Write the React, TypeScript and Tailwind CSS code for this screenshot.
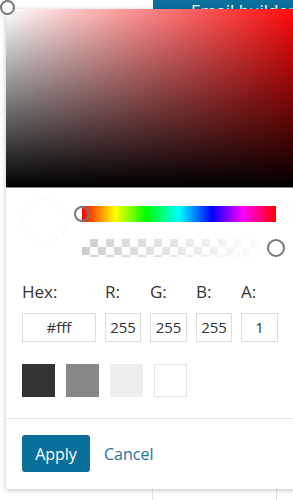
import React from "react";

export default function App() {
  const checker = {
    backgroundImage:
      "linear-gradient(to right, rgba(255,255,255,0) 0%, rgba(255,255,255,1) 100%), repeating-conic-gradient(#cfcfcf 0% 25%, #ffffff 0% 50%)",
    backgroundSize: "100% 100%, 16px 16px",
  } as React.CSSProperties;
  return (
    <div className="relative w-[293px] h-[500px] bg-white overflow-hidden" style={{ fontFamily: "'Open Sans', 'Noto Sans', sans-serif" }}>
      {/* background page */}
      <div className="flex justify-end">
        <div className="w-[140px] h-[40px] bg-[#0b6f9c] text-white text-[17px] leading-none pt-[2px] pl-[38px] whitespace-nowrap">Email builder</div>
      </div>
      <div className="absolute left-[152px] top-[480px] w-[1px] h-[20px] bg-[#e3e3e3]" />
      <div className="absolute left-[276px] top-[480px] w-[1px] h-[20px] bg-[#e3e3e3]" />

      {/* popup */}
      <div className="absolute left-[6px] top-[9px] w-[300px] h-[480px] bg-white shadow-[0_1px_5px_rgba(0,0,0,0.25)] flex flex-col">
        <div className="relative h-[179px] border-b border-[#888]" style={{ background: "linear-gradient(to bottom, rgba(0,0,0,0), #000), linear-gradient(to right, #fff, #f00)" }} />
        <div className="relative h-[90px]">
          <div className="absolute left-[17px] top-[11px] w-[43px] h-[43px] rounded-full bg-white shadow-[0_0_2px_rgba(0,0,0,0.08)]" />
          <div className="absolute left-[76px] top-[18px] w-[194px] h-[16px]" style={{ background: "linear-gradient(to right, #f00 0%, #ff0 17%, #0f0 33%, #0ff 50%, #00f 67%, #f0f 83%, #f00 100%)" }} />
          <div className="absolute left-[68px] top-[18px] w-[16px] h-[16px] rounded-full border-2 border-[#777]" />
          <div className="absolute left-[76px] top-[51px] w-[188px] h-[18px]" style={checker} />
          <div className="absolute left-[261px] top-[51px] w-[18px] h-[18px] rounded-full border-2 border-[#777] bg-white" />
        </div>
        <div className="px-[16px] text-[#333]">
          <div className="flex gap-[9px] text-[17px] leading-none pt-[5px]">
            <div className="w-[74px]">Hex:</div>
            <div className="w-[36px]">R:</div>
            <div className="w-[37px]">G:</div>
            <div className="w-[36px]">B:</div>
            <div className="w-[37px]">A:</div>
          </div>
          <div className="flex gap-[9px] mt-[13px] text-[15px]">
            <div className="w-[74px] h-[29px] border border-[#ddd] flex items-center justify-center">#fff</div>
            <div className="w-[36px] h-[29px] border border-[#ddd] flex items-center justify-center">255</div>
            <div className="w-[37px] h-[29px] border border-[#ddd] flex items-center justify-center">255</div>
            <div className="w-[36px] h-[29px] border border-[#ddd] flex items-center justify-center">255</div>
            <div className="w-[37px] h-[29px] border border-[#ddd] flex items-center justify-center">1</div>
          </div>
          <div className="flex gap-[11px] mt-[22px]">
            <div className="w-[33px] h-[33px] bg-[#333]" />
            <div className="w-[33px] h-[33px] bg-[#888]" />
            <div className="w-[33px] h-[33px] bg-[#eee]" />
            <div className="w-[33px] h-[33px] bg-white border border-[#e2e2e2]" />
          </div>
        </div>
        <div className="mt-[21px] border-t border-[#e8e8e8] px-[16px] pt-[16px] flex items-center gap-[14px]">
          <div className="w-[68px] h-[37px] rounded-[3px] bg-[#0b6f9c] text-white text-[16px] flex items-center justify-center">Apply</div>
          <div className="text-[16px] text-[#1b75a2]">Cancel</div>
        </div>
      </div>
      {/* saturation handle */}
      <div className="absolute left-0 top-0 w-[15px] h-[15px] rounded-full border-2 border-[#777]" />
    </div>
  );
}
